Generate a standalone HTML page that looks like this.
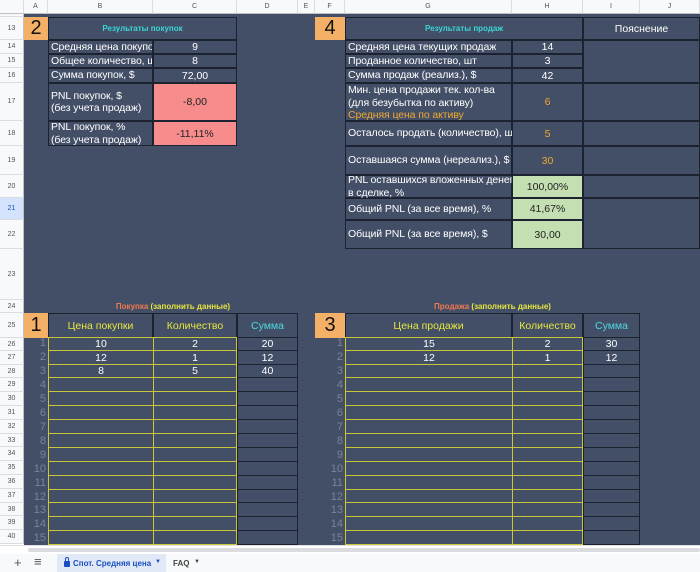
<!DOCTYPE html>
<html><head><meta charset="utf-8"><style>
*{margin:0;padding:0;box-sizing:border-box}
body{width:700px;height:572px;overflow:hidden;background:#fff;font-family:"Liberation Sans","Noto Sans CJK SC",sans-serif;position:relative}
.bg{position:absolute;left:24px;top:14px;width:676px;height:531px;background:#434f66}
.ch{position:absolute;top:0;height:14px;background:#f8f9fa;border-right:1px solid #dadce0;border-bottom:1px solid #c0c0c0;font-size:7px;color:#555;text-align:center;line-height:14px}
.rh{position:absolute;left:0;width:24px;background:#f8f9fa;border-bottom:1px solid #dadce0;border-right:1px solid #c0c0c0;font-size:7px;color:#555;display:flex;align-items:center;justify-content:center}
.c{position:absolute;border:1px solid #1d2230;color:#fff;font-size:10.5px;display:flex;align-items:center;justify-content:center;background:#434f66;white-space:nowrap}
.l{justify-content:flex-start;padding-left:2px;line-height:12.5px;letter-spacing:-0.1px}
.o{background:#f4b066;color:#111;font-size:20px;border-color:#2a2a2a}
.r{background:#f68c8c;color:#222}
.g{background:#c4dfb2;color:#222}
.y{border-color:#c9c63a}
.yt{color:#e6e640}
.t{color:#f0a830}
.n{position:absolute;width:22px;text-align:right;color:#7a8499;font-size:11px}
</style></head><body>
<div class="bg"></div>
<div class="ch" style="left:0;width:24px"></div>
<div class="ch" style="left:24px;width:24px">A</div>
<div class="ch" style="left:48px;width:105px">B</div>
<div class="ch" style="left:153px;width:84px">C</div>
<div class="ch" style="left:237px;width:61px">D</div>
<div class="ch" style="left:298px;width:17px">E</div>
<div class="ch" style="left:315px;width:30px">F</div>
<div class="ch" style="left:345px;width:167px">G</div>
<div class="ch" style="left:512px;width:71px">H</div>
<div class="ch" style="left:583px;width:57px">I</div>
<div class="ch" style="left:640px;width:60px">J</div>
<div class="rh" style="top:14px;height:3px"></div>
<div class="rh" style="top:17px;height:23px">13</div>
<div class="rh" style="top:40px;height:14px">14</div>
<div class="rh" style="top:54px;height:14px">15</div>
<div class="rh" style="top:68px;height:15px">16</div>
<div class="rh" style="top:83px;height:38px">17</div>
<div class="rh" style="top:121px;height:25px">18</div>
<div class="rh" style="top:146px;height:29px">19</div>
<div class="rh" style="top:175px;height:23px">20</div>
<div class="rh" style="top:198px;height:22px;background:#d3e3fd;color:#1a4fc4">21</div>
<div class="rh" style="top:220px;height:29px">22</div>
<div class="rh" style="top:249px;height:51px">23</div>
<div class="rh" style="top:300px;height:13px">24</div>
<div class="rh" style="top:313px;height:25px">25</div>
<div class="rh" style="top:338px;height:13px">26</div>
<div class="rh" style="top:351px;height:14px">27</div>
<div class="rh" style="top:365px;height:13px">28</div>
<div class="rh" style="top:378px;height:14px">29</div>
<div class="rh" style="top:392px;height:14px">30</div>
<div class="rh" style="top:406px;height:14px">31</div>
<div class="rh" style="top:420px;height:14px">32</div>
<div class="rh" style="top:434px;height:13px">33</div>
<div class="rh" style="top:447px;height:14px">34</div>
<div class="rh" style="top:461px;height:14px">35</div>
<div class="rh" style="top:475px;height:14px">36</div>
<div class="rh" style="top:489px;height:14px">37</div>
<div class="rh" style="top:503px;height:13px">38</div>
<div class="rh" style="top:516px;height:14px">39</div>
<div class="rh" style="top:530px;height:14px">40</div>

<div class="c o" style="left:24px;top:17px;width:24px;height:23px;border:none">2</div>
<div class="c" style="left:48px;top:17px;width:189px;height:23px;color:#3ad6d6;font-size:8px;font-weight:bold">Результаты покупок</div>
<div class="c l" style="left:48px;top:40px;width:105px;height:14px;overflow:hidden">Средняя цена покупок</div>
<div class="c" style="left:153px;top:40px;width:84px;height:14px">9</div>
<div class="c l" style="left:48px;top:54px;width:105px;height:14px;overflow:hidden">Общее количество, шт</div>
<div class="c" style="left:153px;top:54px;width:84px;height:14px">8</div>
<div class="c l" style="left:48px;top:68px;width:105px;height:15px">Сумма покупок, $</div>
<div class="c" style="left:153px;top:68px;width:84px;height:15px">72,00</div>
<div class="c l" style="left:48px;top:83px;width:105px;height:38px">PNL покупок, $<br>(без учета продаж)</div>
<div class="c r" style="left:153px;top:83px;width:84px;height:38px">-8,00</div>
<div class="c l" style="left:48px;top:121px;width:105px;height:25px">PNL покупок, %<br>(без учета продаж)</div>
<div class="c r" style="left:153px;top:121px;width:84px;height:25px">-11,11%</div>

<div class="c o" style="left:315px;top:17px;width:30px;height:23px;border:none">4</div>
<div class="c" style="left:345px;top:17px;width:238px;height:23px;color:#3ad6d6;font-size:8px;font-weight:bold">Результаты продаж</div>
<div class="c" style="left:583px;top:17px;width:117px;height:23px">Пояснение</div>
<div class="c l" style="left:345px;top:40px;width:167px;height:14px">Средняя цена текущих продаж</div>
<div class="c" style="left:512px;top:40px;width:71px;height:14px">14</div>
<div class="c l" style="left:345px;top:54px;width:167px;height:14px">Проданное количество, шт</div>
<div class="c" style="left:512px;top:54px;width:71px;height:14px">3</div>
<div class="c l" style="left:345px;top:68px;width:167px;height:15px">Сумма продаж (реализ.), $</div>
<div class="c" style="left:512px;top:68px;width:71px;height:15px">42</div>
<div class="c l" style="left:345px;top:83px;width:167px;height:38px;display:block;padding-top:0px">Мин. цена продажи тек. кол-ва<br>(для безубытка по активу)<br><span class="t">Средняя цена по активу</span></div>
<div class="c t" style="left:512px;top:83px;width:71px;height:38px">6</div>
<div class="c l" style="left:345px;top:121px;width:167px;height:25px">Осталось продать (количество), шт</div>
<div class="c t" style="left:512px;top:121px;width:71px;height:25px">5</div>
<div class="c l" style="left:345px;top:146px;width:167px;height:29px">Оставшаяся сумма (нереализ.), $</div>
<div class="c t" style="left:512px;top:146px;width:71px;height:29px">30</div>
<div class="c l" style="left:345px;top:175px;width:167px;height:23px">PNL оставшихся вложенных денег<br>в сделке, %</div>
<div class="c g" style="left:512px;top:175px;width:71px;height:23px">100,00%</div>
<div class="c l" style="left:345px;top:198px;width:167px;height:22px">Общий PNL (за все время), %</div>
<div class="c g" style="left:512px;top:198px;width:71px;height:22px">41,67%</div>
<div class="c l" style="left:345px;top:220px;width:167px;height:29px">Общий PNL (за все время), $</div>
<div class="c g" style="left:512px;top:220px;width:71px;height:29px">30,00</div>
<div class="c" style="left:583px;top:40px;width:117px;height:43px"></div>
<div class="c" style="left:583px;top:83px;width:117px;height:38px"></div>
<div class="c" style="left:583px;top:121px;width:117px;height:25px"></div>
<div class="c" style="left:583px;top:146px;width:117px;height:29px"></div>
<div class="c" style="left:583px;top:175px;width:117px;height:23px"></div>
<div class="c" style="left:583px;top:198px;width:117px;height:51px"></div>

<div style="position:absolute;left:48px;width:250px;top:302px;text-align:center;font-size:8px;font-weight:bold;color:#e6e640"><span style="color:#f07850">Покупка</span> (заполнить данные)</div>
<div style="position:absolute;left:345px;width:295px;top:302px;text-align:center;font-size:8px;font-weight:bold;color:#e6e640"><span style="color:#f07850">Продажа</span> (заполнить данные)</div>

<div class="c o" style="left:24px;top:313px;width:24px;height:25px;border:none">1</div>
<div class="c yt" style="left:48px;top:313px;width:105px;height:25px">Цена покупки</div>
<div class="c yt" style="left:153px;top:313px;width:84px;height:25px">Количество</div>
<div class="c" style="left:237px;top:313px;width:61px;height:25px;color:#4ed8e0">Сумма</div>
<div class="c o" style="left:315px;top:313px;width:30px;height:25px;border:none">3</div>
<div class="c yt" style="left:345px;top:313px;width:167px;height:25px">Цена продажи</div>
<div class="c yt" style="left:512px;top:313px;width:71px;height:25px">Количество</div>
<div class="c" style="left:583px;top:313px;width:57px;height:25px;color:#4ed8e0">Сумма</div>

<div class="c y" style="left:48px;top:337px;width:106px;height:14px">10</div><div class="c y" style="left:153px;top:337px;width:84px;height:14px">2</div><div class="c" style="left:237px;top:337px;width:61px;height:14px">20</div>
<div class="c y" style="left:345px;top:337px;width:168px;height:14px">15</div><div class="c y" style="left:512px;top:337px;width:71px;height:14px">2</div><div class="c" style="left:583px;top:337px;width:57px;height:14px">30</div>
<div class="c y" style="left:48px;top:350px;width:106px;height:15px">12</div><div class="c y" style="left:153px;top:350px;width:84px;height:15px">1</div><div class="c" style="left:237px;top:350px;width:61px;height:15px">12</div>
<div class="c y" style="left:345px;top:350px;width:168px;height:15px">12</div><div class="c y" style="left:512px;top:350px;width:71px;height:15px">1</div><div class="c" style="left:583px;top:350px;width:57px;height:15px">12</div>
<div class="c y" style="left:48px;top:364px;width:106px;height:14px">8</div><div class="c y" style="left:153px;top:364px;width:84px;height:14px">5</div><div class="c" style="left:237px;top:364px;width:61px;height:14px">40</div>
<div class="c y" style="left:345px;top:364px;width:168px;height:14px"></div><div class="c y" style="left:512px;top:364px;width:71px;height:14px"></div><div class="c" style="left:583px;top:364px;width:57px;height:14px"></div>
<div class="n" style="left:24px;top:337px">1</div><div class="n" style="left:321px;top:337px">1</div>
<div class="n" style="left:24px;top:351px">2</div><div class="n" style="left:321px;top:351px">2</div>
<div class="n" style="left:24px;top:365px">3</div><div class="n" style="left:321px;top:365px">3</div>

<div class="c y" style="left:48px;top:377px;width:106px;height:15px"></div><div class="c y" style="left:153px;top:377px;width:84px;height:15px"></div><div class="c" style="left:237px;top:377px;width:61px;height:15px"></div><div class="c y" style="left:345px;top:377px;width:168px;height:15px"></div><div class="c y" style="left:512px;top:377px;width:71px;height:15px"></div><div class="c" style="left:583px;top:377px;width:57px;height:15px"></div><div class="n" style="left:24px;top:379px">4</div><div class="n" style="left:321px;top:379px">4</div>
<div class="c y" style="left:48px;top:391px;width:106px;height:15px"></div><div class="c y" style="left:153px;top:391px;width:84px;height:15px"></div><div class="c" style="left:237px;top:391px;width:61px;height:15px"></div><div class="c y" style="left:345px;top:391px;width:168px;height:15px"></div><div class="c y" style="left:512px;top:391px;width:71px;height:15px"></div><div class="c" style="left:583px;top:391px;width:57px;height:15px"></div><div class="n" style="left:24px;top:393px">5</div><div class="n" style="left:321px;top:393px">5</div>
<div class="c y" style="left:48px;top:405px;width:106px;height:15px"></div><div class="c y" style="left:153px;top:405px;width:84px;height:15px"></div><div class="c" style="left:237px;top:405px;width:61px;height:15px"></div><div class="c y" style="left:345px;top:405px;width:168px;height:15px"></div><div class="c y" style="left:512px;top:405px;width:71px;height:15px"></div><div class="c" style="left:583px;top:405px;width:57px;height:15px"></div><div class="n" style="left:24px;top:407px">6</div><div class="n" style="left:321px;top:407px">6</div>
<div class="c y" style="left:48px;top:419px;width:106px;height:15px"></div><div class="c y" style="left:153px;top:419px;width:84px;height:15px"></div><div class="c" style="left:237px;top:419px;width:61px;height:15px"></div><div class="c y" style="left:345px;top:419px;width:168px;height:15px"></div><div class="c y" style="left:512px;top:419px;width:71px;height:15px"></div><div class="c" style="left:583px;top:419px;width:57px;height:15px"></div><div class="n" style="left:24px;top:421px">7</div><div class="n" style="left:321px;top:421px">7</div>
<div class="c y" style="left:48px;top:433px;width:106px;height:15px"></div><div class="c y" style="left:153px;top:433px;width:84px;height:15px"></div><div class="c" style="left:237px;top:433px;width:61px;height:15px"></div><div class="c y" style="left:345px;top:433px;width:168px;height:15px"></div><div class="c y" style="left:512px;top:433px;width:71px;height:15px"></div><div class="c" style="left:583px;top:433px;width:57px;height:15px"></div><div class="n" style="left:24px;top:435px">8</div><div class="n" style="left:321px;top:435px">8</div>
<div class="c y" style="left:48px;top:447px;width:106px;height:15px"></div><div class="c y" style="left:153px;top:447px;width:84px;height:15px"></div><div class="c" style="left:237px;top:447px;width:61px;height:15px"></div><div class="c y" style="left:345px;top:447px;width:168px;height:15px"></div><div class="c y" style="left:512px;top:447px;width:71px;height:15px"></div><div class="c" style="left:583px;top:447px;width:57px;height:15px"></div><div class="n" style="left:24px;top:449px">9</div><div class="n" style="left:321px;top:449px">9</div>
<div class="c y" style="left:48px;top:461px;width:106px;height:15px"></div><div class="c y" style="left:153px;top:461px;width:84px;height:15px"></div><div class="c" style="left:237px;top:461px;width:61px;height:15px"></div><div class="c y" style="left:345px;top:461px;width:168px;height:15px"></div><div class="c y" style="left:512px;top:461px;width:71px;height:15px"></div><div class="c" style="left:583px;top:461px;width:57px;height:15px"></div><div class="n" style="left:24px;top:463px">10</div><div class="n" style="left:321px;top:463px">10</div>
<div class="c y" style="left:48px;top:475px;width:106px;height:15px"></div><div class="c y" style="left:153px;top:475px;width:84px;height:15px"></div><div class="c" style="left:237px;top:475px;width:61px;height:15px"></div><div class="c y" style="left:345px;top:475px;width:168px;height:15px"></div><div class="c y" style="left:512px;top:475px;width:71px;height:15px"></div><div class="c" style="left:583px;top:475px;width:57px;height:15px"></div><div class="n" style="left:24px;top:477px">11</div><div class="n" style="left:321px;top:477px">11</div>
<div class="c y" style="left:48px;top:489px;width:106px;height:15px"></div><div class="c y" style="left:153px;top:489px;width:84px;height:15px"></div><div class="c" style="left:237px;top:489px;width:61px;height:15px"></div><div class="c y" style="left:345px;top:489px;width:168px;height:15px"></div><div class="c y" style="left:512px;top:489px;width:71px;height:15px"></div><div class="c" style="left:583px;top:489px;width:57px;height:15px"></div><div class="n" style="left:24px;top:491px">12</div><div class="n" style="left:321px;top:491px">12</div>
<div class="c y" style="left:48px;top:502px;width:106px;height:15px"></div><div class="c y" style="left:153px;top:502px;width:84px;height:15px"></div><div class="c" style="left:237px;top:502px;width:61px;height:15px"></div><div class="c y" style="left:345px;top:502px;width:168px;height:15px"></div><div class="c y" style="left:512px;top:502px;width:71px;height:15px"></div><div class="c" style="left:583px;top:502px;width:57px;height:15px"></div><div class="n" style="left:24px;top:504px">13</div><div class="n" style="left:321px;top:504px">13</div>
<div class="c y" style="left:48px;top:516px;width:106px;height:15px"></div><div class="c y" style="left:153px;top:516px;width:84px;height:15px"></div><div class="c" style="left:237px;top:516px;width:61px;height:15px"></div><div class="c y" style="left:345px;top:516px;width:168px;height:15px"></div><div class="c y" style="left:512px;top:516px;width:71px;height:15px"></div><div class="c" style="left:583px;top:516px;width:57px;height:15px"></div><div class="n" style="left:24px;top:518px">14</div><div class="n" style="left:321px;top:518px">14</div>
<div class="c y" style="left:48px;top:530px;width:106px;height:15px"></div><div class="c y" style="left:153px;top:530px;width:84px;height:15px"></div><div class="c" style="left:237px;top:530px;width:61px;height:15px"></div><div class="c y" style="left:345px;top:530px;width:168px;height:15px"></div><div class="c y" style="left:512px;top:530px;width:71px;height:15px"></div><div class="c" style="left:583px;top:530px;width:57px;height:15px"></div><div class="n" style="left:24px;top:532px">15</div><div class="n" style="left:321px;top:532px">15</div>

<div style="position:absolute;left:0;top:545px;width:700px;height:9px;background:#fff;border-top:1px solid #e0e0e0"></div>
<div style="position:absolute;left:28px;top:548px;width:672px;height:4px;background:#dadce0;border-radius:2px"></div>
<div style="position:absolute;left:0;top:554px;width:700px;height:18px;background:#f8f9fa"></div>
<div style="position:absolute;left:14px;top:555px;font-size:13px;color:#555">+</div>
<div style="position:absolute;left:34px;top:554px;font-size:13px;color:#555">≡</div>
<div style="position:absolute;left:57px;top:554px;width:109px;height:18px;background:#e1e9f7"></div>
<div style="position:absolute;left:64px;top:561px;width:6px;height:6px;background:#1a4fc4;border-radius:1px"></div>
<div style="position:absolute;left:65px;top:557px;width:4px;height:5px;border:1.5px solid #1a4fc4;border-bottom:none;border-radius:2px 2px 0 0"></div>
<div style="position:absolute;left:73px;top:559px;font-size:8px;font-weight:bold;color:#1a4fc4">Спот. Средняя цена</div>
<div style="position:absolute;left:155px;top:559px;font-size:6px;color:#1a4fc4">▼</div>
<div style="position:absolute;left:173px;top:559px;font-size:8px;font-weight:bold;color:#444">FAQ</div>
<div style="position:absolute;left:194px;top:559px;font-size:6px;color:#444">▼</div>
</body></html>
